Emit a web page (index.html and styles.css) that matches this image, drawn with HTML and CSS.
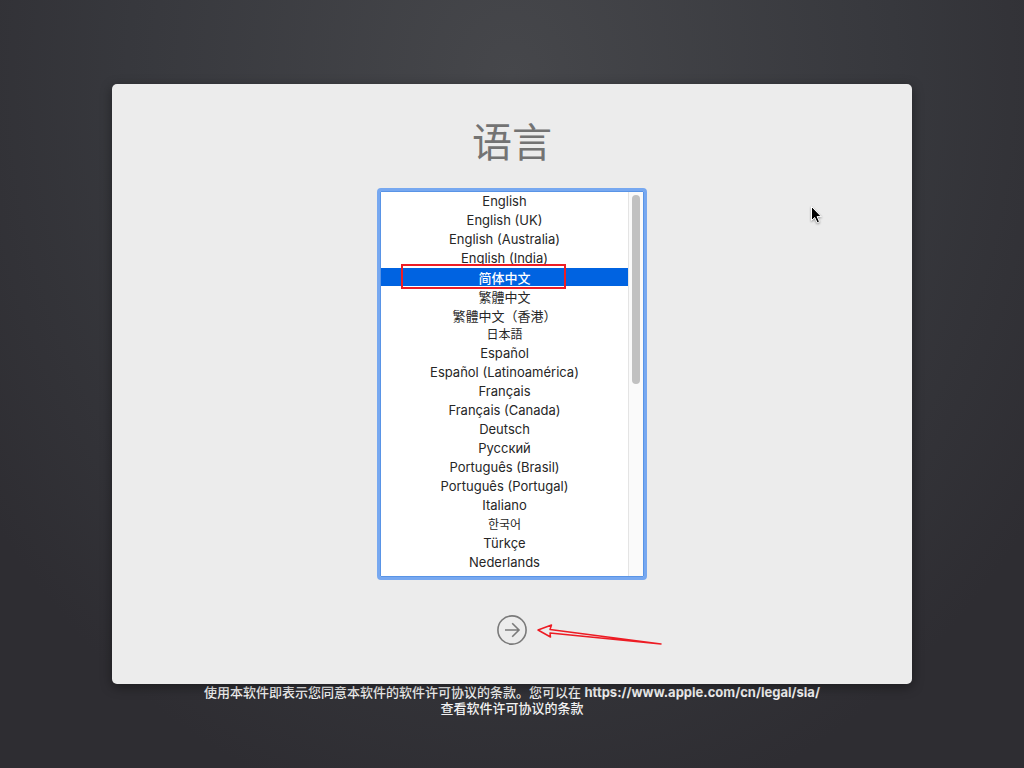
FILE: index.html
```html
<!DOCTYPE html>
<html lang="zh-CN">
<head>
<meta charset="utf-8">
<meta name="viewport" content="width=device-width, initial-scale=1">
<title>语言</title>
<link rel="stylesheet" href="styles.css">
</head>
<body>
<main class="window">
  <h1 class="title"><label for="language">语言</label></h1>
  <div class="picker">
    <select class="languages" id="language" size="20">
      <option>English</option>
      <option>English (UK)</option>
      <option>English (Australia)</option>
      <option>English (India)</option>
      <option class="cjk" selected>简体中文</option>
      <option class="cjk" lang="zh-TW">繁體中文</option>
      <option class="cjk" lang="zh-HK">繁體中文（香港）</option>
      <option class="compact" lang="ja">日本語</option>
      <option>Español</option>
      <option>Español (Latinoamérica)</option>
      <option>Français</option>
      <option>Français (Canada)</option>
      <option>Deutsch</option>
      <option>Русский</option>
      <option>Português (Brasil)</option>
      <option>Português (Portugal)</option>
      <option>Italiano</option>
      <option class="compact" lang="ko">한국어</option>
      <option>Türkçe</option>
      <option>Nederlands</option>
    </select>
    <div class="track"><div class="thumb"></div></div>
    <div class="highlight"></div>
  </div>
  <div class="actions">
    <button class="next" type="button" aria-label="继续">
      <svg width="30" height="30" viewBox="0 0 30 30" fill="none" stroke="#7a7a7a" stroke-width="1.6">
        <circle cx="15" cy="15" r="14.1"/>
        <path d="M8 15h14M15.2 8.2 22 15l-6.8 6.8"/>
      </svg>
    </button>
    <svg class="pointer-arrow" width="126" height="24" viewBox="0 0 126 24" fill="none" stroke="#ed1c24" stroke-width="1.5" stroke-linejoin="round">
      <path d="M2 9 15.500 4 14 8.500 125 23 14 12 14.500 16Z"/>
    </svg>
  </div>
  <svg class="cursor" width="16" height="22" viewBox="0 0 16 22">
    <path d="M1.500 1.500v14l3.200-3 2.500 5.300 2.300-1-2.400-5.200h4.200Z" fill="#000" stroke="#fff" stroke-width="1"/>
  </svg>
</main>
<footer class="license">使用本软件即表示您同意本软件的软件许可协议的条款。您可以在 <a href="https://www.apple.com/cn/legal/sla/">https://www.apple.com/cn/legal/sla/</a><br>查看软件许可协议的条款</footer>
</body>
</html>
```
FILE: styles.css
```css
* { box-sizing: border-box; }

body {
  margin: 0;
  min-height: 100vh;
  padding: 84px 16px 48px;
  display: flex;
  flex-direction: column;
  align-items: center;
  font-family: Inter, "Noto Sans CJK SC", sans-serif;
  font-size: 13px;
  background: radial-gradient(ellipse 640px 760px at 50% 10%, #46474b 0%, #37383d 60%, #2e2d32 100%);
}

.window {
  position: relative;
  width: 100%;
  max-width: 800px;
  padding: 31px 24px 39px;
  display: flex;
  flex-direction: column;
  align-items: center;
  background: #ececec;
  border-radius: 5px;
  box-shadow: 0 3px 12px rgba(0, 0, 0, 0.4);
}

.title {
  margin: 0 0 17px;
  font-size: 40px;
  line-height: 56px;
  font-weight: 400;
  color: #737373;
}

.picker {
  position: relative;
  display: flex;
  width: 270px;
  max-width: 100%;
  border: 3px solid #77a8f0;
  border-radius: 4px;
  background: #fff;
  box-shadow: inset 0 0 0 1px #5994e6;
  padding: 1px;
}

.languages {
  flex: 1;
  min-width: 0;
  margin: 0;
  padding: 0 0 4px;
  border: 0;
  outline: 0;
  border-radius: 0;
  background: transparent;
  color: #262626;
  font: inherit;
  text-align: center;
  scrollbar-width: none;
}

.languages option {
  height: 19px;
  min-height: 19px;
  padding: 1px 0 0;
  line-height: 19px;
  text-align: center;
}

.languages .cjk {
  padding: 0;
  line-height: 17px;
}

.languages .compact {
  padding: 0;
  font-size: 12px;
}

.languages option:checked {
  color: #fff;
  font-weight: 500;
  background: linear-gradient(#0063e1, #0063e1) 0 0 / 100% 18px no-repeat #fff;
}

.languages [lang="zh-TW"],
.languages [lang="zh-HK"] { font-family: Inter, "Noto Sans CJK TC", sans-serif; }
.languages [lang="ja"] { font-family: Inter, "Noto Sans CJK JP", sans-serif; }
.languages [lang="ko"] { font-family: Inter, "Noto Sans CJK KR", sans-serif; }

.track {
  width: 15px;
  padding: 3px;
  background: #fafafa;
  border-left: 1px solid #e4e4e4;
}

.thumb {
  width: 8px;
  height: 50%;
  border-radius: 4px;
  background: #c1c1c1;
}

.highlight {
  position: absolute;
  left: 21px;
  top: 73px;
  width: 165px;
  height: 25px;
  border: 2px solid #ed1c24;
  pointer-events: none;
}

.actions {
  position: relative;
  margin-top: 35px;
}

.next {
  display: block;
  padding: 0;
  border: 0;
  border-radius: 50%;
  background: none;
}

.next svg { display: block; }

.pointer-arrow {
  position: absolute;
  left: 39px;
  top: 6px;
}

.cursor {
  position: absolute;
  left: 698px;
  top: 121px;
  filter: drop-shadow(0 1px 1px rgba(0, 0, 0, 0.4));
}

.license {
  color: #f2f2f2;
  font-weight: 500;
  line-height: 16px;
  text-align: center;
}

.license a {
  color: inherit;
  font-weight: 700;
  text-decoration: none;
}
```
